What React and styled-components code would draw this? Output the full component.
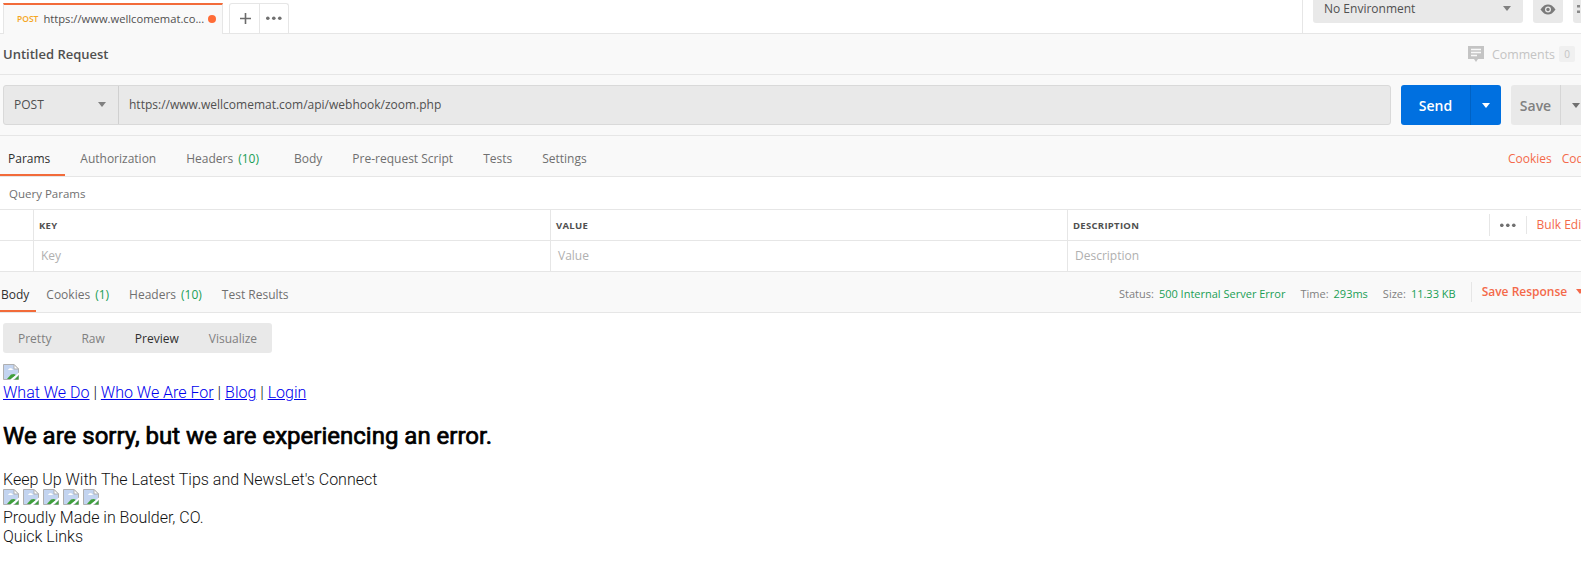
import React from "react";
import styled, { createGlobalStyle } from "styled-components";

const GlobalStyle = createGlobalStyle`
  html, body {
    margin: 0;
    padding: 0;
    background: #fff;
    overflow: hidden;
  }
  * { box-sizing: border-box; }
`;

const Page = styled.div`
  width: 1581px;
  height: 561px;
  overflow: hidden;
  font-family: "Open Sans", sans-serif;
  font-size: 12px;
  color: #505050;
`;

const TabBar = styled.div`
  height: 34px;
  display: flex;
  align-items: flex-end;
  padding-left: 3px;
  border-bottom: 1px solid #e6e6e6;
  background: #fff;
`;

const RequestTab = styled.div`
  width: 220px;
  height: 31px;
  margin-bottom: -1px;
  padding: 0 6px 2px 13px;
  display: flex;
  align-items: center;
  gap: 5px;
  background: #f9f9f9;
  border-top: 2px solid #f26b3a;
  border-left: 1px solid #e6e6e6;
  border-right: 1px solid #e6e6e6;
  font-size: 11.2px;
  color: #505050;
  white-space: nowrap;
`;

const MethodTag = styled.span`
  font-size: 8.5px;
  font-weight: 600;
  color: #f5a623;
`;

const TabUrl = styled.span`
  flex: 1;
  min-width: 0;
`;

const Dot = styled.span`
  width: 8px;
  height: 8px;
  flex-shrink: 0;
  border-radius: 50%;
  background: #ff6c37;
`;

const TabTools = styled.div`
  display: flex;
  height: 30px;
  margin-left: 6px;
  border: 1px solid #e6e6e6;
  border-bottom: 0;
  border-radius: 3px 3px 0 0;
`;

const TabTool = styled.div`
  width: ${(p) => p.$w}px;
  padding-left: ${(p) => p.$shift || 0}px;
  display: flex;
  align-items: center;
  justify-content: center;
  color: #6b6b6b;
  & + & { border-left: 1px solid #e6e6e6; }
`;

const EnvArea = styled.div`
  margin-left: auto;
  height: 33px;
  width: 279px;
  display: flex;
  gap: 10px;
  padding-left: 10px;
  border-left: 1px solid #e6e6e6;
  align-items: flex-start;
  flex-shrink: 0;
  overflow: hidden;
`;

const EnvSelect = styled.div`
  width: 210px;
  height: 23px;
  flex-shrink: 0;
  padding: 0 12px 6px 11px;
  display: flex;
  align-items: center;
  justify-content: space-between;
  background: #e9e9e9;
  border-radius: 0 0 3px 3px;
  font-size: 12px;
  color: #505050;
`;

const EyeButton = styled.div`
  width: 30px;
  height: 23px;
  flex-shrink: 0;
  padding-bottom: 5px;
  display: flex;
  align-items: center;
  justify-content: ${(p) => (p.$start ? "flex-start" : "center")};
  padding-left: ${(p) => (p.$start ? 4 : 0)}px;
  background: #e9e9e9;
  border-radius: 0 0 3px 3px;
`;

const Caret = styled.span`
  width: 0;
  height: 0;
  flex-shrink: 0;
  border-left: 4px solid transparent;
  border-right: 4px solid transparent;
  border-top: 5px solid ${(p) => p.$color || "#808080"};
`;

const TitleRow = styled.div`
  height: 41px;
  padding: 0 6px 0 3px;
  display: flex;
  align-items: center;
  justify-content: space-between;
  background: #f9f9f9;
  border-bottom: 1px solid #e6e6e6;
`;

const Title = styled.div`
  font-size: 13px;
  font-weight: 600;
  color: #505050;
`;

const CommentsLink = styled.div`
  display: flex;
  align-items: center;
  color: #c4c4c4;
  font-size: 12.4px;
`;

const CommentCount = styled.span`
  width: 16px;
  height: 16px;
  margin-left: 4px;
  display: flex;
  align-items: center;
  justify-content: center;
  background: #f0f0f0;
  border-radius: 2px;
  font-size: 10px;
`;

const UrlRow = styled.div`
  height: 61px;
  padding: 10px 0 10px 3px;
  display: flex;
  background: #f9f9f9;
  border-bottom: 1px solid #e6e6e6;
`;

const UrlGroup = styled.div`
  width: 1388px;
  flex-shrink: 0;
  display: flex;
  background: #e9e9e9;
  border: 1px solid #d9d9d9;
  border-radius: 3px;
`;

const MethodSelect = styled.div`
  width: 115px;
  padding: 0 12px 1px 10px;
  display: flex;
  align-items: center;
  justify-content: space-between;
  border-right: 1px solid #d0d0d0;
  font-size: 12px;
  color: #505050;
`;

const UrlText = styled.div`
  padding: 0 0 1px 10px;
  display: flex;
  align-items: center;
  font-size: 12px;
  color: #505050;
`;

const SplitButton = styled.div`
  width: ${(p) => p.$w}px;
  margin-left: 10px;
  display: flex;
  flex-shrink: 0;
  border-radius: 3px;
  background: ${(p) => (p.$primary ? "#0070e0" : "#e9e9e9")};
  color: ${(p) => (p.$primary ? "#fff" : "#808080")};
  font-size: 14px;
  font-weight: 600;
`;

const SplitLabel = styled.div`
  width: ${(p) => p.$w}px;
  display: flex;
  align-items: center;
  justify-content: center;
`;

const SplitCaret = styled.div`
  width: 31px;
  display: flex;
  align-items: center;
  justify-content: center;
  border-left: 1px solid ${(p) => (p.$primary ? "#0062c4" : "#d6d6d6")};
`;

const TabsRow = styled.div`
  height: 41px;
  display: flex;
  align-items: stretch;
  background: #f9f9f9;
  border-bottom: 1px solid #e6e6e6;
  white-space: nowrap;
`;

const TabItem = styled.div`
  margin-left: ${(p) => p.$gap || 0}px;
  padding: 6px ${(p) => p.$pad || 0}px 0 ${(p) => p.$padLeft || 0}px;
  display: flex;
  align-items: center;
  gap: 4px;
  color: ${(p) => (p.$active ? "#303030" : "#707070")};
  border-bottom: 2px solid ${(p) => (p.$active ? "#f26b3a" : "transparent")};
`;

const Count = styled.span`
  margin-left: ${(p) => p.$ml || 0}px;
  color: #1a9e55;
`;

const RightLinks = styled.div`
  margin-left: auto;
  width: 73px;
  padding-top: 4px;
  flex-shrink: 0;
  display: flex;
  align-items: center;
  gap: 10px;
  overflow: hidden;
  color: #f4694a;
`;

const QueryTitle = styled.div`
  height: 33px;
  padding-left: 9px;
  display: flex;
  align-items: center;
  color: #707070;
  font-size: 11.5px;
  border-bottom: 1px solid #e6e6e6;
`;

const ParamRow = styled.div`
  height: 31px;
  display: grid;
  grid-template-columns: 33px 517px 517px 1fr;
  background: #fff;
  border-bottom: 1px solid #e6e6e6;
`;

const ParamCell = styled.div`
  padding-left: ${(p) => (p.$head ? 5 : 7)}px;
  padding-bottom: ${(p) => (p.$head ? 0 : 2)}px;
  display: flex;
  align-items: center;
  & + & { border-left: 1px solid #e6e6e6; }
`;

const HeadText = styled.span`
  font-size: 9.5px;
  font-weight: 700;
  letter-spacing: 0.3px;
  color: #505050;
`;

const Placeholder = styled.span`
  color: #b0b0b0;
  font-size: 12px;
`;

const BulkTools = styled.div`
  margin-left: auto;
  height: 22px;
  width: 92px;
  padding-left: 10px;
  display: flex;
  align-items: center;
  gap: 10px;
  border-left: 1px solid #e6e6e6;
  color: #f4694a;
  white-space: nowrap;
  overflow: hidden;
  flex-shrink: 0;
`;

const BulkLabel = styled.span`
  height: 18px;
  padding-left: 10px;
  line-height: 18px;
  border-left: 1px solid #e6e6e6;
`;

const StatusArea = styled.div`
  margin-left: auto;
  width: 462px;
  padding-top: 3px;
  flex-shrink: 0;
  display: flex;
  align-items: center;
  font-size: 11px;
  color: #808080;
`;

const StatusValue = styled.span`
  margin: 0 15px 0 5px;
  color: #1a9e55;
`;

const SaveResponse = styled.div`
  height: 20px;
  margin-bottom: 4px;
  padding-left: 10px;
  display: flex;
  align-items: center;
  gap: 9px;
  border-left: 1px solid #e6e6e6;
  color: #f4694a;
  font-size: 12px;
  font-weight: 600;
`;

const ResponseBody = styled.div`
  padding: 10px 3px 0;
`;

const ModeSwitch = styled.div`
  width: 269px;
  height: 30px;
  display: flex;
  align-items: center;
  background: #e9e9e9;
  border-radius: 3px;
`;

const ModeItem = styled.span`
  margin-left: ${(p) => p.$gap}px;
  color: ${(p) => (p.$active ? "#303030" : "#808080")};
  font-size: 12px;
`;

const Preview = styled.div`
  margin-top: 11px;
  font-family: Roboto, sans-serif;
  font-weight: 300;
  font-size: 16px;
  line-height: 19px;
  color: #111;
`;

const Line = styled.div`
  height: 19px;
`;

const PreviewLink = styled.a`
  color: #0000ee;
  text-decoration: underline;
`;

const ErrorHeading = styled.h2`
  margin: 20px 0;
  font-size: 24px;
  line-height: 28px;
  font-weight: 400;
  color: #000;
  -webkit-text-stroke: 0.7px #000;
`;

const IconRow = styled.div`
  height: 19px;
  display: flex;
  gap: 4px;
`;

const BrokenImage = () => (
  <svg width="16" height="16" viewBox="0 0 16 16" style={{ display: "block" }}>
    <path d="M0.5 0.5H11L15.5 5V15.5H0.5Z" fill="#c3d4f0" stroke="#b0b0b0" />
    <path d="M11 0.5V5H15.5Z" fill="#fff" stroke="#b0b0b0" />
    <path d="M5 6C6 3.5 9 3.5 10 6Z" fill="#fff" />
    <path d="M4 15L8 10.5L11 10L13 11L8 15Z" fill="#3f9e3a" />
    <path d="M7 16L16 8.5V10.5L10 16Z" fill="#fff" />
    <path d="M11.5 15.5L15.5 11.5V15.5Z" fill="#3f9e3a" />
  </svg>
);

const TRIPLE = [0, 1, 2];

const Dots = ({ color = "#707070", size = 3.6, gap = 6 }) => (
  <svg
    width={size + gap * 2}
    height={size + 1}
    viewBox={`0 0 ${size + gap * 2} ${size + 1}`}
    style={{ flexShrink: 0 }}
  >
    {TRIPLE.map((i) => (
      <circle key={i} cx={size / 2 + i * gap} cy={(size + 1) / 2} r={size / 2} fill={color} />
    ))}
  </svg>
);

export default function App() {
  return (
    <Page>
      <GlobalStyle />
      <TabBar>
        <RequestTab>
          <MethodTag>POST</MethodTag>
          <TabUrl>https://www.wellcomemat.co...</TabUrl>
          <Dot />
        </RequestTab>
        <TabTools>
          <TabTool $w={29} $shift={1}>
            <svg width="13" height="13" viewBox="0 0 13 13">
              <path d="M6.5 1V12M1 6.5H12" stroke="#6b6b6b" strokeWidth="1.6" />
            </svg>
          </TabTool>
          <TabTool $w={29}>
            <Dots />
          </TabTool>
        </TabTools>
        <EnvArea>
          <EnvSelect>
            No Environment
            <Caret />
          </EnvSelect>
          <EyeButton>
            <svg width="16" height="11" viewBox="0 0 16 11">
              <path d="M0.5 5.5C3 1.8 5.4 0.5 8 0.5S13 1.8 15.5 5.5C13 9.2 10.6 10.5 8 10.5S3 9.2 0.5 5.5Z" fill="#7a7a7a" />
              <circle cx="8" cy="5.5" r="3" fill="#e9e9e9" />
              <circle cx="8" cy="5.5" r="1.7" fill="#7a7a7a" />
            </svg>
          </EyeButton>
          <EyeButton $start>
            <svg width="3" height="10" viewBox="0 0 3 10">
              <path d="M0 1H3V3.5H0ZM0 6.5H3V9H0Z" fill="#8a8a8a" />
            </svg>
          </EyeButton>
        </EnvArea>
      </TabBar>

      <TitleRow>
        <Title>Untitled Request</Title>
        <CommentsLink>
          <svg width="16" height="16" viewBox="0 0 16 16" style={{ marginRight: 8 }}>
            <path d="M0 0H16V13H10L8 16L6 13H0Z" fill="#c4c4c4" />
            <path d="M3 3.5H13M3 6.5H13M3 9.5H9" stroke="#f9f9f9" strokeWidth="1.3" />
          </svg>
          Comments
          <CommentCount>0</CommentCount>
        </CommentsLink>
      </TitleRow>

      <UrlRow>
        <UrlGroup>
          <MethodSelect>
            POST
            <Caret />
          </MethodSelect>
          <UrlText>https://www.wellcomemat.com/api/webhook/zoom.php</UrlText>
        </UrlGroup>
        <SplitButton $primary $w={100}>
          <SplitLabel $w={69}>Send</SplitLabel>
          <SplitCaret $primary>
            <Caret $color="#fff" />
          </SplitCaret>
        </SplitButton>
        <SplitButton $w={80}>
          <SplitLabel $w={49}>Save</SplitLabel>
          <SplitCaret>
            <Caret $color="#707070" />
          </SplitCaret>
        </SplitButton>
      </UrlRow>

      <TabsRow>
        <TabItem $active $padLeft={8} $pad={15}>Params</TabItem>
        <TabItem $gap={15}>Authorization</TabItem>
        <TabItem $gap={30}>Headers <Count $ml={1}>(10)</Count></TabItem>
        <TabItem $gap={35}>Body</TabItem>
        <TabItem $gap={30}>Pre-request Script</TabItem>
        <TabItem $gap={30}>Tests</TabItem>
        <TabItem $gap={30}>Settings</TabItem>
        <RightLinks>
          <span>Cookies</span>
          <span>Code</span>
        </RightLinks>
      </TabsRow>

      <QueryTitle>Query Params</QueryTitle>
      <ParamRow>
        <ParamCell />
        <ParamCell $head><HeadText>KEY</HeadText></ParamCell>
        <ParamCell $head><HeadText>VALUE</HeadText></ParamCell>
        <ParamCell $head>
          <HeadText>DESCRIPTION</HeadText>
          <BulkTools>
            <Dots />
            <BulkLabel>Bulk Edit</BulkLabel>
          </BulkTools>
        </ParamCell>
      </ParamRow>
      <ParamRow>
        <ParamCell />
        <ParamCell><Placeholder>Key</Placeholder></ParamCell>
        <ParamCell><Placeholder>Value</Placeholder></ParamCell>
        <ParamCell><Placeholder>Description</Placeholder></ParamCell>
      </ParamRow>

      <TabsRow>
        <TabItem $active $padLeft={1} $pad={7}>Body</TabItem>
        <TabItem $gap={10}>Cookies <Count $ml={1}>(1)</Count></TabItem>
        <TabItem $gap={20}>Headers <Count $ml={1}>(10)</Count></TabItem>
        <TabItem $gap={20}>Test Results</TabItem>
        <StatusArea>
          Status:<StatusValue>500 Internal Server Error</StatusValue>
          Time:<StatusValue>293ms</StatusValue>
          Size:<StatusValue>11.33 KB</StatusValue>
          <SaveResponse>
            Save Response
            <Caret $color="#f4694a" />
          </SaveResponse>
        </StatusArea>
      </TabsRow>

      <ResponseBody>
        <ModeSwitch>
          <ModeItem $gap={15}>Pretty</ModeItem>
          <ModeItem $gap={30}>Raw</ModeItem>
          <ModeItem $gap={30} $active>Preview</ModeItem>
          <ModeItem $gap={30}>Visualize</ModeItem>
        </ModeSwitch>
        <Preview>
          <Line><BrokenImage /></Line>
          <Line>
            <PreviewLink>What We Do</PreviewLink> | <PreviewLink>Who We Are For</PreviewLink> |{" "}
            <PreviewLink>Blog</PreviewLink> | <PreviewLink>Login</PreviewLink>
          </Line>
          <ErrorHeading>We are sorry, but we are experiencing an error.</ErrorHeading>
          <Line>Keep Up With The Latest Tips and NewsLet's Connect</Line>
          <IconRow>
            <BrokenImage />
            <BrokenImage />
            <BrokenImage />
            <BrokenImage />
            <BrokenImage />
          </IconRow>
          <Line>Proudly Made in Boulder, CO.</Line>
          <Line>Quick Links</Line>
        </Preview>
      </ResponseBody>
    </Page>
  );
}
